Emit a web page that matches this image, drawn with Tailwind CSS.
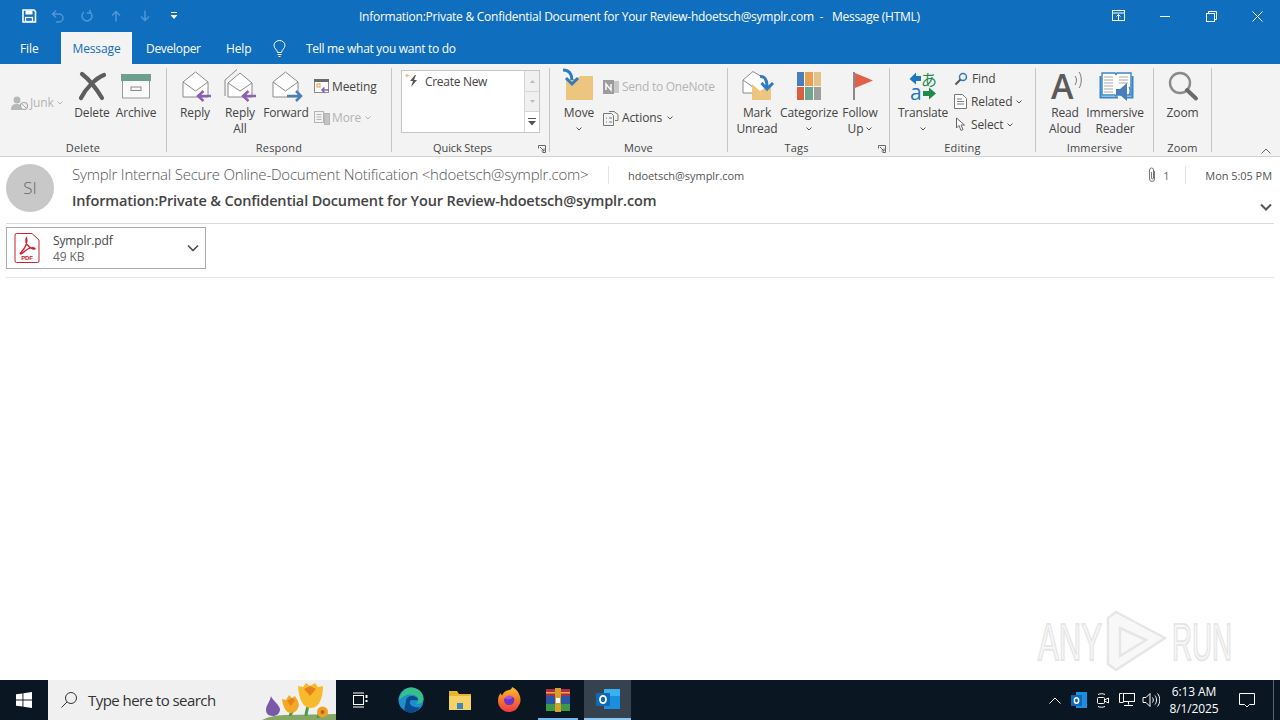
<!DOCTYPE html>
<html>
<head>
<meta charset="utf-8">
<script src="https://cdn.jsdelivr.net/npm/@tailwindcss/browser@4"></script>
</head>
<body class="w-[1280px] h-[720px] overflow-hidden bg-white relative font-['Open_Sans','Noto_Sans',sans-serif] text-[12px] tracking-[-0.12px] text-[#444]">
<div class="flex flex-col h-[720px]">

<!-- title bar -->
<div class="h-8 bg-[#106ebe] flex items-center text-white shrink-0">
  <div class="w-[359px] flex items-center pl-[14px] shrink-0">
    <div class="w-[29px] flex justify-center"><svg width="16" height="16" viewBox="0 0 16 16"><path d="M2 2h11l1.500 1.500V14H2z" fill="none" stroke="#fff" stroke-width="1.600"/><rect x="4.500" y="2.500" width="7" height="4" fill="#fff"/><rect x="4.500" y="9.500" width="7" height="4" fill="none" stroke="#fff" stroke-width="1.300"/></svg></div>
    <div class="w-[29px] flex justify-center"><svg width="14" height="14" viewBox="0 0 14 14" fill="none" stroke="#4f97d6" stroke-width="1.500"><path d="M5 1.500 1.500 5 5 8.500M1.500 5H8a4 4 0 0 1 0 8H5"/></svg></div>
    <div class="w-[29px] flex justify-center"><svg width="14" height="14" viewBox="0 0 14 14" fill="none" stroke="#4f97d6" stroke-width="1.500"><path d="M4 3a5 5 0 1 0 6 0M10 .8V4H6.800"/></svg></div>
    <div class="w-[29px] flex justify-center"><svg width="12" height="12" viewBox="0 0 12 12" fill="none" stroke="#4f97d6" stroke-width="1.500"><path d="M6 11.500V1.500M2 5.500l4-4 4 4"/></svg></div>
    <div class="w-[29px] flex justify-center"><svg width="12" height="12" viewBox="0 0 12 12" fill="none" stroke="#4f97d6" stroke-width="1.500"><path d="M6 .5v10M2 6.500l4 4 4-4"/></svg></div>
    <div class="w-[29px] flex justify-center"><svg width="8" height="8" viewBox="0 0 8 8" fill="#fff"><rect x="1" y="0" width="6" height="1"/><path d="M.5 3h7L4 7z"/></svg></div>
  </div>
  <div class="whitespace-pre text-[12px] tracking-[-0.26px] pt-[2px]">Information:Private &amp; Confidential Document for Your Review-hdoetsch@symplr.com  -  <span class="ml-[3px]">Message (HTML)</span></div>
  <div class="ml-auto flex">
    <div class="w-[46px] h-8 flex items-center justify-center"><svg width="14" height="12" viewBox="0 0 14 12" fill="none" stroke="#fff"><rect x=".5" y=".5" width="12" height="10"/><path d="M.5 3h12M6.500 10V5M4.500 6.500l2-2 2 2"/></svg></div>
    <div class="w-[46px] h-8 flex items-center justify-center"><div class="w-[10px] h-px bg-white"></div></div>
    <div class="w-[46px] h-8 flex items-center justify-center"><svg width="11" height="11" viewBox="0 0 11 11" fill="none" stroke="#fff"><rect x=".5" y="2.500" width="8" height="8"/><path d="M2.500 2.500v-2h8v8h-2"/></svg></div>
    <div class="w-[46px] h-8 flex items-center justify-center"><svg width="11" height="11" viewBox="0 0 11 11" fill="none" stroke="#fff"><path d="M.5.500l10 10M10.500.5l-10 10"/></svg></div>
  </div>
</div>

<!-- tabs -->
<div class="h-8 bg-[#106ebe] flex items-stretch text-white shrink-0">
  <div class="w-[61px] pl-[20px] pt-[2px] flex items-center">File</div>
  <div class="w-[71px] bg-[#f3f3f3] text-[#106ebe] pt-[2px] flex items-center justify-center">Message</div>
  <div class="w-[94px] pl-[14px] pt-[2px] flex items-center tracking-[-0.3px]">Developer</div>
  <div class="w-[47px] pt-[2px] flex items-center">Help</div>
  <div class="w-[33px] flex items-center"><svg width="13" height="17" viewBox="0 0 13 17" fill="none" stroke="#fff"><path d="M4.500 12.500C4.500 10 1 8.500 1 5.500a5.500 5 0 0 1 11 0c0 3-3.500 4.500-3.500 7zM4.500 14.500h4M5.500 16.500h2"/></svg></div>
  <div class="flex items-center pt-[2px] tracking-[-0.3px]">Tell me what you want to do</div>
</div>

<!-- ribbon -->
<div class="h-[93px] bg-[#f3f3f3] border-b border-[#d2d2d2] flex pt-[4px] shrink-0 text-[#444]">

  <!-- Delete -->
  <div class="w-[167px] h-[84px] border-r border-[#c6c6c6] flex flex-col">
    <div class="flex-1 flex pt-[2px] pl-[11px]">
      <div class="w-[59px] h-[66px] flex items-center gap-px text-[#b4b4b4]">
        <svg width="18" height="16" viewBox="0 0 18 16" class="shrink-0"><circle cx="6" cy="5" r="3.500" fill="#b8b8b8"/><path d="M0 15c0-5 2-6 6-6s5 2 5 6z" fill="#b8b8b8"/><circle cx="13" cy="11" r="3.500" fill="#f3f3f3" stroke="#a8a8a8" stroke-width="1.200"/><path d="M11 9l4 4" stroke="#a8a8a8"/></svg>
        <span>Junk</span><svg width="6" height="4" viewBox="0 0 6 4" fill="none" stroke="#b4b4b4" class="ml-[2px]"><path d="M.5.500l2.500 2.500L5.500.500"/></svg>
      </div>
      <div class="w-[44px] flex flex-col items-center">
        <svg width="32" height="32" viewBox="0 0 32 32"><path d="M6 4c8 6 14 14 20 24M28 5C20 8 10 18 5 28" fill="none" stroke="#5d5d5d" stroke-width="4.200" stroke-linecap="round"/></svg>
        <div class="leading-4 mt-[3px]">Delete</div>
      </div>
      <div class="w-[44px] flex flex-col items-center">
        <svg width="32" height="32" viewBox="0 0 32 32"><rect x="2.500" y="10" width="27" height="18" fill="#fafafa" stroke="#9a9a9a"/><rect x="1" y="4" width="30" height="7" fill="#6e9f8d"/><rect x="11" y="17" width="10" height="3.500" fill="none" stroke="#8a8a8a"/></svg>
        <div class="leading-4 mt-[3px]">Archive</div>
      </div>
    </div>
    <div class="h-4 leading-4 text-center -mb-[4px] text-[11px] tracking-[0.2px]">Delete</div>
  </div>

  <!-- Respond -->
  <div class="w-[225px] h-[84px] border-r border-[#c6c6c6] flex flex-col">
    <div class="flex-1 flex pt-[2px] pl-[6px]">
      <div class="w-[44px] flex flex-col items-center">
        <svg width="32" height="32" viewBox="0 0 32 32" class="overflow-visible"><path d="M4 12 16.500 2 29 12V27H4z" fill="#fff" stroke="#8a8a8a"/><path d="M4 12l12.500 9L29 12" fill="none" stroke="#8a8a8a"/><path d="M19 26h13M24.500 21 19 26l5.500 5" fill="none" stroke="#8d5fb3" stroke-width="2.500"/></svg>
        <div class="leading-4 mt-[3px]">Reply</div>
      </div>
      <div class="w-[46px] flex flex-col items-center text-center">
        <svg width="32" height="32" viewBox="0 0 32 32" class="overflow-visible"><path d="M1 26V10L13-.5" fill="none" stroke="#8a8a8a"/><path d="M4 13 16 3 28 13V27H4z" fill="#fff" stroke="#8a8a8a"/><path d="M4 13l12 8 12-8" fill="none" stroke="#8a8a8a"/><path d="M19 26h13M24.500 21 19 26l5.500 5" fill="none" stroke="#8d5fb3" stroke-width="2.500"/></svg>
        <div class="leading-4 mt-[3px]">Reply<br>All</div>
      </div>
      <div class="w-[46px] flex flex-col items-center">
        <svg width="32" height="32" viewBox="0 0 32 32" class="overflow-visible"><path d="M3 12 15.500 2 28 12V27H3z" fill="#fff" stroke="#8a8a8a"/><path d="M3 12l12.500 9L28 12" fill="none" stroke="#8a8a8a"/><path d="M17 26h14M26 21l5 5-5 5" fill="none" stroke="#4a7ebb" stroke-width="2.500"/></svg>
        <div class="leading-4 mt-[3px]">Forward</div>
      </div>
      <div class="ml-[5px] flex flex-col">
        <div class="h-[31px] flex items-center gap-[2px] pt-[2px]">
          <svg width="16" height="15" viewBox="0 0 16 15"><rect x=".5" y=".5" width="14" height="13" fill="#fff" stroke="#8a8a8a"/><rect x="0" y="0" width="15" height="3" fill="#6a6a6a"/><rect x="3" y="5" width="3" height="3" fill="none" stroke="#e0a040"/><path d="M8 11h7M10.500 8.500 8 11l2.500 2.500" fill="none" stroke="#8d5fb3" stroke-width="1.500"/></svg>
          <span>Meeting</span>
        </div>
        <div class="h-[33px] flex items-center gap-[2px] text-[#b4b4b4]">
          <svg width="16" height="15" viewBox="0 0 16 15" fill="none" stroke="#b4b4b4"><rect x=".5" y="1.500" width="9" height="11"/><path d="M2.500 4.500h5M2.500 7h5M2.500 9.500h5"/><rect x="10.500" y="3.500" width="5" height="11" fill="#c4c4c4"/></svg>
          <span>More</span><svg width="6" height="4" viewBox="0 0 6 4" fill="none" stroke="#b4b4b4" class="ml-[2px]"><path d="M.5.500l2.500 2.500L5.500.500"/></svg>
        </div>
      </div>
    </div>
    <div class="h-4 leading-4 text-center -mb-[4px] text-[11px] tracking-[0.2px]">Respond</div>
  </div>

  <!-- Quick Steps -->
  <div class="w-[158px] h-[84px] border-r border-[#c6c6c6] flex flex-col relative">
    <div class="flex-1 pl-[9px] pt-[2px]">
      <div class="w-[139px] h-[63px] bg-white border border-[#c6c6c6] flex">
        <div class="flex-1 flex items-start pl-[3px] pt-[1px] gap-[5px]">
          <svg width="15" height="16" viewBox="0 0 15 16"><path d="M2 1l.7 1.800L4.500 3.500l-1.800.7L2 6l-.7-1.800L-.5 3.500l1.800-.7z" fill="#e8c060"/><path d="M10 3 5 9h3l-2 6 6-7H9l2-5z" fill="#555"/></svg>
          <span class="leading-4 mt-[2px] tracking-[-0.3px]">Create New</span>
        </div>
        <div class="w-[15px] border-l border-[#d6d6d6] flex flex-col text-[#aaa]">
          <div class="h-[21px] bg-[#f0f0f0] border-b border-[#d6d6d6] flex items-center justify-center"><svg width="5" height="3"><path d="M0 3h5L2.500 0z" fill="#bbb"/></svg></div>
          <div class="h-[20px] bg-[#f0f0f0] border-b border-[#d6d6d6] flex items-center justify-center"><svg width="5" height="3"><path d="M0 0h5L2.500 3z" fill="#bbb"/></svg></div>
          <div class="flex-1 flex items-center justify-center"><svg width="8" height="8" viewBox="0 0 8 8" fill="#555"><rect x="0" y="0" width="8" height="1"/><path d="M0 3h8L4 7.500z"/></svg></div>
        </div>
      </div>
    </div>
    <div class="h-4 leading-4 text-center -mb-[4px] text-[11px] pr-[16px]">Quick Steps</div>
    <svg width="8" height="8" viewBox="0 0 8 8" fill="none" stroke="#666" class="absolute right-[3px] bottom-[-1px]"><path d="M.5 3.500v-3h7v7h-3M2 2l4 4M6 3.500V6H3.500"/></svg>
  </div>

  <!-- Move -->
  <div class="w-[178px] h-[84px] border-r border-[#c6c6c6] flex flex-col">
    <div class="flex-1 flex pt-[2px] pl-[8px]">
      <div class="w-[42px] flex flex-col items-center">
        <svg width="32" height="32" viewBox="0 0 32 32" class="overflow-visible"><path d="M3 9h11l3-3h13v24H3z" fill="#ecc57e"/><path d="M0 0c6 0 9 4 9 10M3 8l6 6 6-6" fill="none" stroke="#2f7cc4" stroke-width="3"/></svg>
        <div class="leading-4 mt-[3px] text-center">Move<svg width="6" height="4" viewBox="0 0 6 4" fill="none" stroke="#555" class="mx-auto mt-[6px]"><path d="M.5.500l2.500 2.500L5.500.500"/></svg></div>
      </div>
      <div class="ml-[3px] flex flex-col">
        <div class="h-[31px] flex items-center gap-[3px] pt-[2px] text-[#b4b4b4] tracking-[-0.25px]">
          <svg width="16" height="16" viewBox="0 0 16 16"><rect x="5" y="2" width="11" height="12" fill="#c8c8c8"/><rect x="0" y="1" width="11" height="14" fill="#9c9c9c"/><path d="M3 11V5l5 6V5" fill="none" stroke="#fff" stroke-width="1.400"/></svg>
          <span>Send to OneNote</span>
        </div>
        <div class="h-[33px] flex items-center gap-[3px]">
          <svg width="16" height="16" viewBox="0 0 16 16" fill="none" stroke="#777"><path d="M.5 3.500h8l2 2v10H.5zM6 1.500h5l4 3v6h-3"/><path d="M3 8h1M6 8h3M3 12h1M6 12h3"/></svg>
          <span>Actions</span><svg width="6" height="4" viewBox="0 0 6 4" fill="none" stroke="#555" class="ml-[2px]"><path d="M.5.500l2.500 2.500L5.500.500"/></svg>
        </div>
      </div>
    </div>
    <div class="h-4 leading-4 text-center -mb-[4px] text-[11px] tracking-[0.2px]">Move</div>
  </div>

  <!-- Tags -->
  <div class="w-[162px] h-[84px] border-r border-[#c6c6c6] flex flex-col relative">
    <div class="flex-1 flex pt-[2px] pl-[7px]">
      <div class="w-[44px] flex flex-col items-center text-center">
        <svg width="32" height="32" viewBox="0 0 32 32" class="overflow-visible"><path d="M2 10 12 1.500 26 10V23H2z" fill="#fff" stroke="#8a8a8a"/><path d="M2 10l10 7" fill="none" stroke="#8a8a8a"/><path d="M11 14l8 7 11-7v16H11z" fill="#ecc57e"/><path d="M19 6.500C24 6 26 10 26 17M20.500 13l5.500 6 6-6" fill="none" stroke="#2f7cc4" stroke-width="3"/></svg>
        <div class="leading-4 mt-[3px]">Mark<br>Unread</div>
      </div>
      <div class="w-[60px] flex flex-col items-center text-center">
        <div class="w-8 h-8 flex items-center justify-center"><div class="w-[24px] h-[28px] grid grid-cols-3 grid-rows-2 gap-px">
          <div class="bg-[#4a7ebb]"></div><div class="bg-[#e8a050]"></div><div class="bg-[#e5c28a]"></div>
          <div class="bg-[#d9603f]"></div><div class="bg-[#6fa58f]"></div><div class="bg-[#9e9e9e]"></div>
        </div></div>
        <div class="leading-4 mt-[3px]">Categorize<svg width="6" height="4" viewBox="0 0 6 4" fill="none" stroke="#555" class="mx-auto mt-[6px]"><path d="M.5.500l2.500 2.500L5.500.500"/></svg></div>
      </div>
      <div class="w-[42px] flex flex-col items-center text-center">
        <svg width="32" height="32" viewBox="0 0 32 32"><rect x="9" y="2" width="2" height="28" fill="#8a8a8a"/><path d="M11 3l18 7.500L11 18z" fill="#e2604a"/></svg>
        <div class="leading-4 mt-[3px]">Follow<br><span class="inline-flex items-center gap-[3px]">Up<svg width="6" height="4" viewBox="0 0 6 4" fill="none" stroke="#555"><path d="M.5.500l2.500 2.500L5.500.500"/></svg></span></div>
      </div>
    </div>
    <div class="h-4 leading-4 text-center -mb-[4px] text-[11px] tracking-[0.2px] pr-[24px]">Tags</div>
    <svg width="8" height="8" viewBox="0 0 8 8" fill="none" stroke="#666" class="absolute right-[3px] bottom-[-1px]"><path d="M.5 3.500v-3h7v7h-3M2 2l4 4M6 3.500V6H3.500"/></svg>
  </div>

  <!-- Editing -->
  <div class="w-[146px] h-[84px] border-r border-[#c6c6c6] flex flex-col">
    <div class="flex-1 flex pt-[2px] pl-[9px]">
      <div class="w-[48px] flex flex-col items-center">
        <div class="w-8 h-8 relative overflow-visible">
          <svg width="32" height="32" viewBox="0 0 32 32" class="absolute inset-0"><path d="M14 6H9V2.500L2.500 9 9 14.500V11h5z" fill="#1a78c2"/><path d="M16 21h6v-3.500l7 6-7 6V26h-6z" fill="#1e8a4c"/></svg>
          <span class="absolute left-[14px] top-[1px] text-[16px] leading-4 font-['Noto_Sans_CJK_JP',sans-serif] text-[#1e8a4c]">あ</span>
          <span class="absolute left-[3px] top-[14px] text-[21px] leading-[17px] text-[#1a78c2]">a</span>
        </div>
        <div class="leading-4 mt-[3px] text-center tracking-[-0.2px]">Translate<svg width="6" height="4" viewBox="0 0 6 4" fill="none" stroke="#555" class="mx-auto mt-[6px]"><path d="M.5.500l2.500 2.500L5.500.500"/></svg></div>
      </div>
      <div class="ml-[7px] flex flex-col -mt-[3px]">
        <div class="h-[23px] flex items-center gap-[4px]">
          <svg width="14" height="14" viewBox="0 0 14 14" fill="none"><circle cx="9" cy="5" r="3.500" stroke="#2f7cc4" stroke-width="1.500"/><path d="M6.500 7.500 1.500 12.500" stroke="#555" stroke-width="2"/></svg>
          <span>Find</span>
        </div>
        <div class="h-[23px] flex items-center gap-[4px]">
          <svg width="13" height="15" viewBox="0 0 13 15" fill="none" stroke="#777"><path d="M.5.500h8l4 4v10H.5z" fill="#fff"/><path d="M3 5h5M3 7.500h7M3 10h7"/></svg>
          <span>Related</span><svg width="6" height="4" viewBox="0 0 6 4" fill="none" stroke="#555"><path d="M.5.500l2.500 2.500L5.500.500"/></svg>
        </div>
        <div class="h-[23px] flex items-center gap-[4px]">
          <svg width="13" height="15" viewBox="0 0 13 15" fill="#fff" stroke="#666"><path d="M2.500 1v10l2.500-2.500 2 5 2-1-2-4.500h3.500z"/></svg>
          <span>Select</span><svg width="6" height="4" viewBox="0 0 6 4" fill="none" stroke="#555"><path d="M.5.500l2.500 2.500L5.500.500"/></svg>
        </div>
      </div>
    </div>
    <div class="h-4 leading-4 text-center -mb-[4px] text-[11px] tracking-[0.2px]">Editing</div>
  </div>

  <!-- Immersive -->
  <div class="w-[118px] h-[84px] border-r border-[#c6c6c6] flex flex-col">
    <div class="flex-1 flex pt-[2px] pl-[7px]">
      <div class="w-[44px] flex flex-col items-center text-center">
        <div class="w-8 h-8 relative">
          <span class="absolute left-[2px] top-[3px] text-[34px] leading-[26px] text-[#5a5a5a] font-semibold">A</span>
          <svg width="10" height="18" viewBox="0 0 10 18" fill="none" stroke="#777" class="absolute left-[25px] top-[2px]"><path d="M1 4c2 2 2 6 0 9M5 0c3 4 3 12 0 16"/></svg>
        </div>
        <div class="leading-4 mt-[3px]">Read<br>Aloud</div>
      </div>
      <div class="w-[56px] flex flex-col items-center text-center">
        <svg width="32" height="32" viewBox="0 0 32 32" class="overflow-visible"><path d="M3 3h13l1 1.500L18 3h14v22H18l-1 1-1-1H3z" fill="#fff" stroke="#3a86c8" stroke-width="1.400"/><path d="M1.500 6v21.500H19M33.500 6v21.500H28" fill="none" stroke="#3a86c8" stroke-width="2"/><path d="M5 7h9M5 10h9M5 13h9M5 16h9M5 19h9M5 22h9M20 7h9M20 10h9M20 13h9" stroke="#a8a8a8"/><path d="M17 19h4l7-6v18l-7-6h-4z" fill="#4a7ebb"/><path d="M30 17c1.500 2 1.500 6 0 8" fill="none" stroke="#4a7ebb" stroke-width="1.300"/></svg>
        <div class="leading-4 mt-[3px]">Immersive<br>Reader</div>
      </div>
    </div>
    <div class="h-4 leading-4 text-center -mb-[4px] text-[11px] tracking-[0.2px]">Immersive</div>
  </div>

  <!-- Zoom -->
  <div class="w-[58px] h-[84px] border-r border-[#c6c6c6] flex flex-col">
    <div class="flex-1 flex pt-[2px] justify-center">
      <div class="flex flex-col items-center">
        <svg width="32" height="32" viewBox="0 0 32 32"><circle cx="13" cy="13" r="10" fill="none" stroke="#8a8a8a" stroke-width="2.400"/><path d="M20 20 29 28.500" stroke="#6a6a6a" stroke-width="4" stroke-linecap="round"/></svg>
        <div class="leading-4 mt-[3px]">Zoom</div>
      </div>
    </div>
    <div class="h-4 leading-4 text-center -mb-[4px] text-[11px] tracking-[0.2px]">Zoom</div>
  </div>

  <div class="flex-1 flex justify-end items-end pr-[9px] pb-[2px]"><svg width="10" height="6" viewBox="0 0 10 6" fill="none" stroke="#666"><path d="M.5 5.500 5 1l4.500 4.500"/></svg></div>
</div>

<!-- message header -->
<div class="h-[67px] shrink-0 flex mx-[6px] border-b border-[#dcdcdc] text-[#666]">
  <div class="w-[48px] h-[48px] mt-[7px] rounded-full bg-[#c8c8c8] flex items-center justify-center text-[17px] font-light text-[#666]">SI</div>
  <div class="ml-[18px] flex-1 flex flex-col">
    <div class="h-[34px] flex items-center pt-[1px]">
      <div class="w-[536px] text-[15px] tracking-[-0.22px] font-light text-[#555] whitespace-nowrap">Symplr Internal Secure Online-Document Notification &lt;hdoetsch@symplr.com&gt;</div>
      <div class="w-px h-[18px] bg-[#e4e4e4]"></div>
      <div class="ml-[19px] pt-[3px] text-[11px] tracking-[-0.05px] text-[#555]">hdoetsch@symplr.com</div>
      <div class="ml-auto flex items-center h-[18px] mr-[2px]">
        <svg width="10" height="16" viewBox="0 0 10 16" fill="none" stroke="#777"><path d="M7.500 4v8a2.500 2.500 0 0 1-5 0V3a2 2 0 0 1 4 0v8a1 1 0 0 1-2 0V5"/></svg>
        <span class="ml-[6px] w-[22px] text-[11px] pt-[3px]">1</span>
        <div class="w-px h-[18px] bg-[#e4e4e4]"></div>
        <span class="ml-[19px] pt-[3px] text-[11px] text-[#555] tracking-[-0.05px]">Mon 5:05 PM</span>
      </div>
    </div>
    <div class="flex items-center -mt-[1px]">
      <div class="text-[14.5px] font-semibold text-[#444] tracking-[-0.15px] whitespace-nowrap">Information:Private &amp; Confidential Document for Your Review-hdoetsch@symplr.com</div>
      <svg width="12" height="8" viewBox="0 0 12 8" fill="none" stroke="#555" stroke-width="2" class="ml-auto mr-[2px] mt-[12px]"><path d="M1 1.500l5 5 5-5"/></svg>
    </div>
  </div>
</div>

<!-- attachment -->
<div class="h-[54px] shrink-0 mx-[6px] border-b border-[#e4e4e4] pt-[3px]">
  <div class="w-[200px] h-[42px] border border-[#ababab] flex items-center">
    <svg width="26" height="30" viewBox="0 0 26 30" class="ml-[7px]"><path d="M1 2a1.500 1.500 0 0 1 1.500-1.500H18L25 7v21a1.500 1.500 0 0 1-1.500 1.500h-21A1.500 1.500 0 0 1 1 28z" fill="#fff" stroke="#c8202c"/><path d="M12.500 5c1.500 4-1 10-5.500 14.500-2 2 .5 2 4-1.500 4-3 8-4 10-2.500 .5 1-4 1-8-4-1-1.500-1.500-3-1-5.500z" fill="none" stroke="#d4202c" stroke-width="1.400"/><text x="13" y="27" font-size="6" font-weight="700" text-anchor="middle" fill="#c8202c" font-family="Liberation Sans">PDF</text></svg>
    <div class="ml-[13px] flex flex-col text-[#444] pt-[2px]">
      <span class="leading-4">Symplr.pdf</span>
      <span class="leading-4 text-[#666]">49 KB</span>
    </div>
    <svg width="12" height="8" viewBox="0 0 12 8" fill="none" stroke="#444" stroke-width="1.500" class="ml-auto mr-[6px]"><path d="M1 1.500l5 5 5-5"/></svg>
  </div>
</div>

<div class="flex-1"></div>

<!-- taskbar -->
<div class="h-[40px] bg-[#0a1622] flex items-stretch shrink-0 text-white">
  <div class="w-[48px] flex items-center justify-center"><svg width="16" height="16" viewBox="0 0 16 16" fill="#fff"><path d="M0 2.300 6.500 1.400V7.500H0zM7.400 1.300 16 0v7.500H7.400zM0 8.400h6.500v6.200L0 13.700zM7.400 8.400H16V16l-8.600-1.300z"/></svg></div>
  <div class="w-[288px] bg-[#f0f0f0] flex items-center relative overflow-hidden text-[#333]">
    <svg width="18" height="18" viewBox="0 0 18 18" fill="none" stroke="#333" class="ml-[12px]"><circle cx="11" cy="7" r="5.500"/><path d="M7 11 1.500 16.500"/></svg>
    <span class="ml-[10px] text-[15px] tracking-[-0.55px]">Type here to search</span>
    <svg width="90" height="40" viewBox="0 0 90 40" class="absolute right-0 top-0">
      <path d="M16 40c8-4 16-5 26-5 16 0 32-1 48-1v6z" fill="#86a866"/>
      <path d="M44 36c1-3 2-4 3-6M60 36c0-3 1-6 2-10M72 38c0-2 1-3 2-5" stroke="#4f9a4a" stroke-width="3" fill="none"/>
      <path d="M25 16c1 4 8 8 9 13 0 5-4 7-7 7-5 0-7-3-7-6 0-5 4-8 5-14z" fill="#7a5aa8"/>
      <path d="M36 19l4 1 3-5 3 3 3-2 3 5 1 4c-1 5-4 8-8 8-5 0-8-6-9-14z" fill="#f3a826"/>
      <path d="M41 21l4 5 4-6-3-2z" fill="#e8801c"/>
      <path d="M52 6l5 1 3-4 4 3 5-3 3 4 5-1c0 12-4 22-12 22S53 20 52 6z" fill="#f6bb2c"/>
      <path d="M58 9l6 7 6-7-6-3z" fill="#e8801c"/>
      <circle cx="76.500" cy="32" r="5.500" fill="#eea028"/><circle cx="76.500" cy="32" r="2" fill="#c0601a"/>
    </svg>
  </div>
  <div class="w-[48px] flex items-center justify-center"><svg width="16" height="16" viewBox="0 0 16 16" fill="none" stroke="#fff"><rect x="1.500" y="3.500" width="10" height="9"/><path d="M1 1h11M1 15h11"/><path d="M14.500 3v3M14.500 8v2" stroke-width="2"/></svg></div>
  <div class="w-[50px] ml-[2px] flex items-center justify-center"><svg width="26" height="26" viewBox="0 0 26 26"><circle cx="13" cy="13" r="12.500" fill="#1b8fd0"/><path d="M1 13C2 5 8 .5 13 .5c7 0 12.500 5 12.500 11 0 4-4 6-7.500 5 2-1 3-3 2-5-1-3-4-4-7-4-5 0-9 2-12 5.500z" fill="#35c08a"/><path d="M8 14c0-3 3-5 6-5 3 0 6 2 6 3 0 2-4 1-6 1-3 0-3 4 0 6 2 1 5 2 8 1-2 3-5 5.500-9 5.500-3 0-5-1-5-1-3-2-.5-6 0-10z" fill="#0b4a8a"/></svg></div>
  <div class="w-[48px] flex items-center justify-center"><svg width="24" height="22" viewBox="0 0 24 22"><path d="M1 2h8l2 3h12v15H1z" fill="#e8b62e"/><path d="M1 7h22v14H1z" fill="#f5d266"/><rect x="9" y="14" width="6" height="6" fill="#3a86c8"/></svg></div>
  <div class="w-[50px] flex items-center justify-center"><svg width="26" height="26" viewBox="0 0 26 26"><defs><linearGradient id="ff" x1="0" y1="0" x2="0" y2="1"><stop offset="0" stop-color="#ffc02e"/><stop offset=".55" stop-color="#f7712a"/><stop offset="1" stop-color="#ee3a4a"/></linearGradient></defs><path d="M13 3c1 0 3-1 3-3 4 2 6 4 7 7 2 4 2 8 0 11-2 5-6 7-10 7-6 0-11-5-11-11 0-3 .5-6 3-8 0 1 .5 2 1 2.500C7 6 9 3.500 13 3z" fill="url(#ff)"/><path d="M8 12c2-3 7-4 10-1 1 4-1 7-5 7-3 0-5-2-5-6z" fill="#6b35c9"/><path d="M9 11c2-3 5-3 7-2 1 1 0 3-2 3-3 1-4 0-5-1z" fill="#b04ee0"/></svg></div>
  <div class="w-[48px] relative flex items-center justify-center"><svg width="24" height="24" viewBox="0 0 24 24"><rect x="0" y="1" width="24" height="7" fill="#b02a4a"/><rect x="0" y="8" width="24" height="8" fill="#2a56a8"/><rect x="0" y="16" width="24" height="7" fill="#3a9a4a"/><rect x="0" y="4" width="24" height="1.500" fill="#e8b028"/><rect x="9" y="0" width="6" height="24" fill="#d8a028"/><rect x="10" y="10" width="4" height="5" fill="#fff"/></svg><div class="absolute left-[4px] right-[4px] bottom-0 h-[2px] bg-[#76b9ed]"></div></div>
  <div class="w-[47px] ml-[2px] bg-[#36434e] border-b-2 border-[#8cc6f2] flex items-center justify-center"><svg width="26" height="24" viewBox="0 0 26 24"><rect x="9" y="2" width="16" height="20" fill="#1a8fe0"/><rect x="9" y="2" width="16" height="7" fill="#36b2f0"/><rect x="1" y="6" width="14" height="13" rx="1" fill="#0f68b8"/><ellipse cx="8" cy="12.500" rx="3" ry="3.700" fill="none" stroke="#fff" stroke-width="1.800"/></svg></div>

  <div class="ml-auto flex items-stretch">
    <div class="w-[24px] flex items-center justify-center"><svg width="12" height="7" viewBox="0 0 12 7" fill="none" stroke="#fff"><path d="M.5 6.500 6 1l5.500 5.500"/></svg></div>
    <div class="w-[24px] flex items-center justify-center"><svg width="16" height="16" viewBox="0 0 16 16"><rect x="5" y="0" width="11" height="16" fill="#1a8fe0"/><rect x="0" y="3" width="11" height="11" fill="#0f68b8"/><ellipse cx="5.500" cy="8.500" rx="2.200" ry="2.800" fill="none" stroke="#fff" stroke-width="1.400"/></svg></div>
    <div class="w-[24px] flex items-center justify-center"><svg width="16" height="16" viewBox="0 0 16 16" fill="none" stroke="#fff"><rect x="2.500" y="5.500" width="7" height="6" rx="1"/><path d="M9.500 8l4-2v5l-4-2M3 2.500c2-1 5-1 7 0M3 14.500c2 1 5 1 7 0"/></svg></div>
    <div class="w-[24px] flex items-center justify-center"><svg width="16" height="16" viewBox="0 0 16 16" fill="none" stroke="#fff"><rect x="4.500" y="1.500" width="11" height="8"/><path d="M.5 1.500h3M.5 1.500v9h4M9.500 9.500v3M5 13.500h9"/></svg></div>
    <div class="w-[24px] flex items-center justify-center"><svg width="18" height="16" viewBox="0 0 18 16" fill="none" stroke="#fff"><path d="M1 5.500h3l4-4v13l-4-4H1zM10.500 5.500c1 1.500 1 3.500 0 5M13 3.500c2 2.500 2 6.500 0 9M15.500 1.500c3 3.500 3 9.500 0 13"/></svg></div>
    <div class="w-[62px] flex flex-col items-center justify-center leading-[17px] text-[12px]"><span>6:13 AM</span><span>8/1/2025</span></div>
    <div class="w-[44px] flex items-center justify-center"><svg width="16" height="16" viewBox="0 0 16 16" fill="none" stroke="#fff"><path d="M.5 1.500h15v11h-5l-2.500 2.500-2.500-2.500h-5z"/></svg></div>
    <div class="w-[11px] flex items-stretch"><div class="w-px bg-[#5a646e] ml-[4px]"></div></div>
  </div>
</div>
</div>

<!-- watermark -->
<svg width="210" height="66" viewBox="0 0 210 66" class="absolute left-[1032px] top-[608px]" fill="none">
  <text transform="translate(6 52) scale(0.6 1)" font-size="52" font-family="Liberation Sans" fill="#f9f9f9" stroke="#e6e6e6" stroke-width="2">ANY</text>
  <text transform="translate(140 52) scale(0.535 1)" font-size="52" font-family="Liberation Sans" fill="#f9f9f9" stroke="#e6e6e6" stroke-width="2">RUN</text>
  <path d="M84 4 133 30 84 62 76 56V10zM88 20 114 32 88 48z" fill="#f8f8f8" stroke="#e6e6e6" stroke-width="2.500"/>
</svg>
</body>
</html>
